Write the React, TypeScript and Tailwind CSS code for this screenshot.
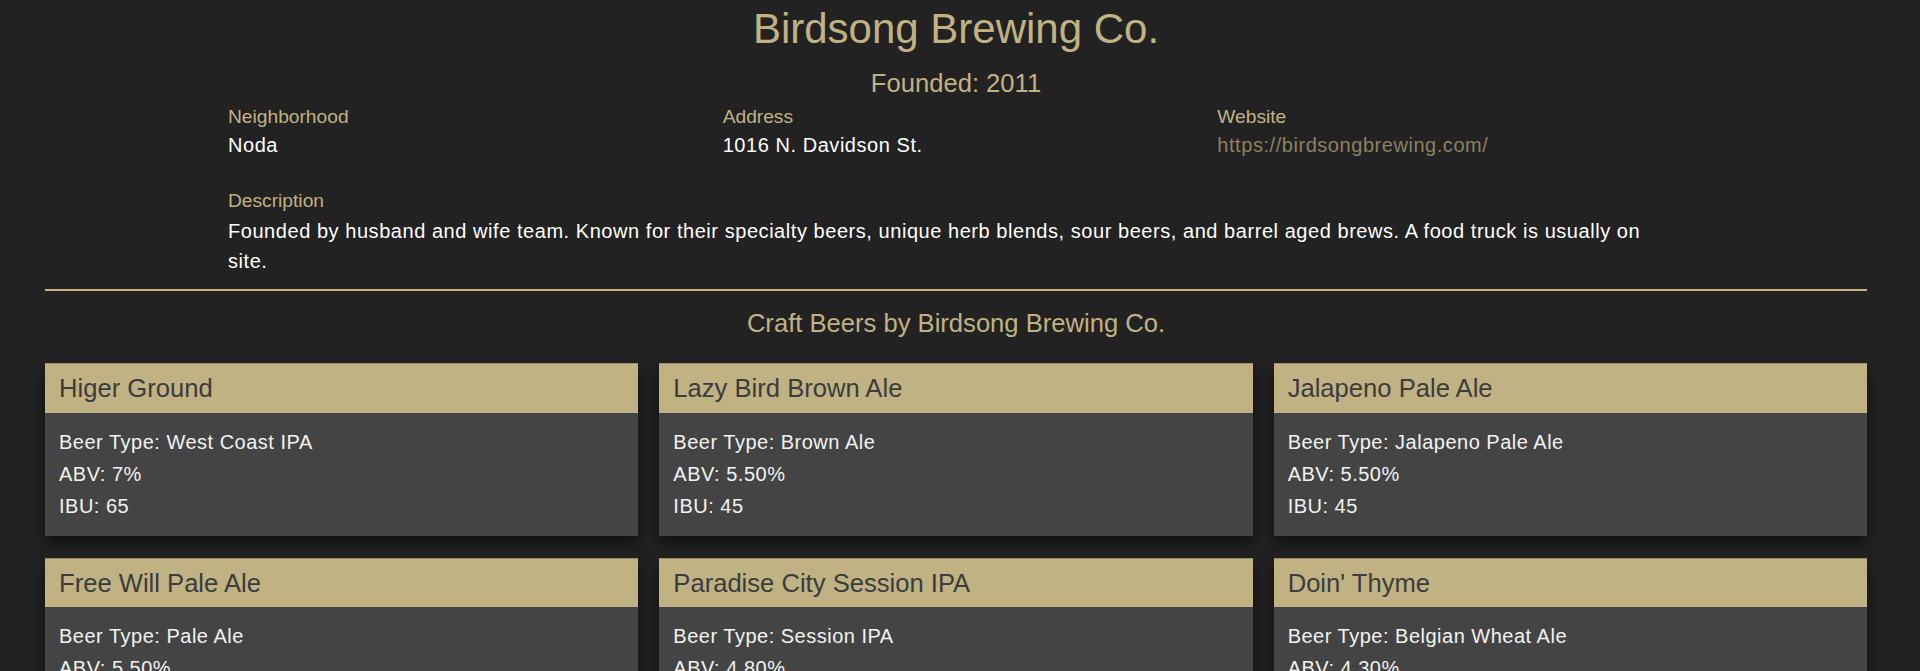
import React from 'react';

const beers = [
  { name: 'Higer Ground', type: 'West Coast IPA', abv: '7%', ibu: '65' },
  { name: 'Lazy Bird Brown Ale', type: 'Brown Ale', abv: '5.50%', ibu: '45' },
  { name: 'Jalapeno Pale Ale', type: 'Jalapeno Pale Ale', abv: '5.50%', ibu: '45' },
  { name: 'Free Will Pale Ale', type: 'Pale Ale', abv: '5.50%', ibu: '40' },
  { name: 'Paradise City Session IPA', type: 'Session IPA', abv: '4.80%', ibu: '40' },
  { name: "Doin' Thyme", type: 'Belgian Wheat Ale', abv: '4.30%', ibu: '20' },
];

function Info({ label, children, tight }: { label: string; children: React.ReactNode; tight?: boolean }) {
  return (
    <div>
      <div className="text-[19.2px] leading-[28.8px] text-[#c0b283]">{label}</div>
      <div className={tight ? 'text-[20px] leading-[30px] tracking-[0.55px] -mt-[2px]' : 'text-[20px] leading-[30px] tracking-[0.55px]'}>
        {children}
      </div>
    </div>
  );
}

function BeerCard({ beer }: { beer: (typeof beers)[number] }) {
  return (
    <div className="bg-[#444444] shadow-[0_8px_14px_rgba(0,0,0,0.55)]">
      <div className="bg-[#c0b283] border-t border-[#9c8f66] px-[14px] py-[9px] text-[25.6px] leading-[30.7px] text-[#3c3c3c]">
        {beer.name}
      </div>
      <div className="px-[14px] pt-[13px] pb-[14px] text-[20px] leading-[32px] tracking-[0.5px] text-[#f2f2f2]">
        <div>Beer Type: {beer.type}</div>
        <div>ABV: {beer.abv}</div>
        <div>IBU: {beer.ibu}</div>
      </div>
    </div>
  );
}

export default function App() {
  return (
    <div className="min-h-screen bg-[#222222] text-white font-['Liberation_Sans',Arial,sans-serif] pl-[45px] pr-[53px] pb-10">
      <h1 className="pt-[4px] text-center text-[42px] leading-[50.4px] text-[#c0b283]">Birdsong Brewing Co.</h1>
      <h4 className="mt-[13.6px] text-center text-[25.6px] leading-[30.7px] text-[#c0b283]">Founded: 2011</h4>

      <div className="ml-[183px] w-[1460px] mt-[4px]">
        <div className="grid grid-cols-3 gap-x-[24px]">
          <Info label="Neighborhood" tight>Noda</Info>
          <Info label="Address" tight>1016 N. Davidson St.</Info>
          <Info label="Website" tight>
            <a href="#" className="text-[#8c8160]">https://birdsongbrewing.com/</a>
          </Info>
        </div>
        <div className="mt-[27.4px] pr-[20px]">
          <Info label="Description">
            Founded by husband and wife team. Known for their specialty beers, unique herb blends, sour beers, and barrel aged brews. A food truck is usually on site.
          </Info>
        </div>
      </div>

      <div className="mt-[13px] h-[2px] bg-[#c0b283]" />

      <h4 className="mt-[17px] text-center text-[25.6px] leading-[30.7px] text-[#c0b283]">Craft Beers by Birdsong Brewing Co.</h4>

      <div className="mt-[25px] grid grid-cols-3 gap-x-[21px] gap-y-[21.5px]">
        {beers.map((b) => (
          <BeerCard key={b.name} beer={b} />
        ))}
      </div>
    </div>
  );
}
